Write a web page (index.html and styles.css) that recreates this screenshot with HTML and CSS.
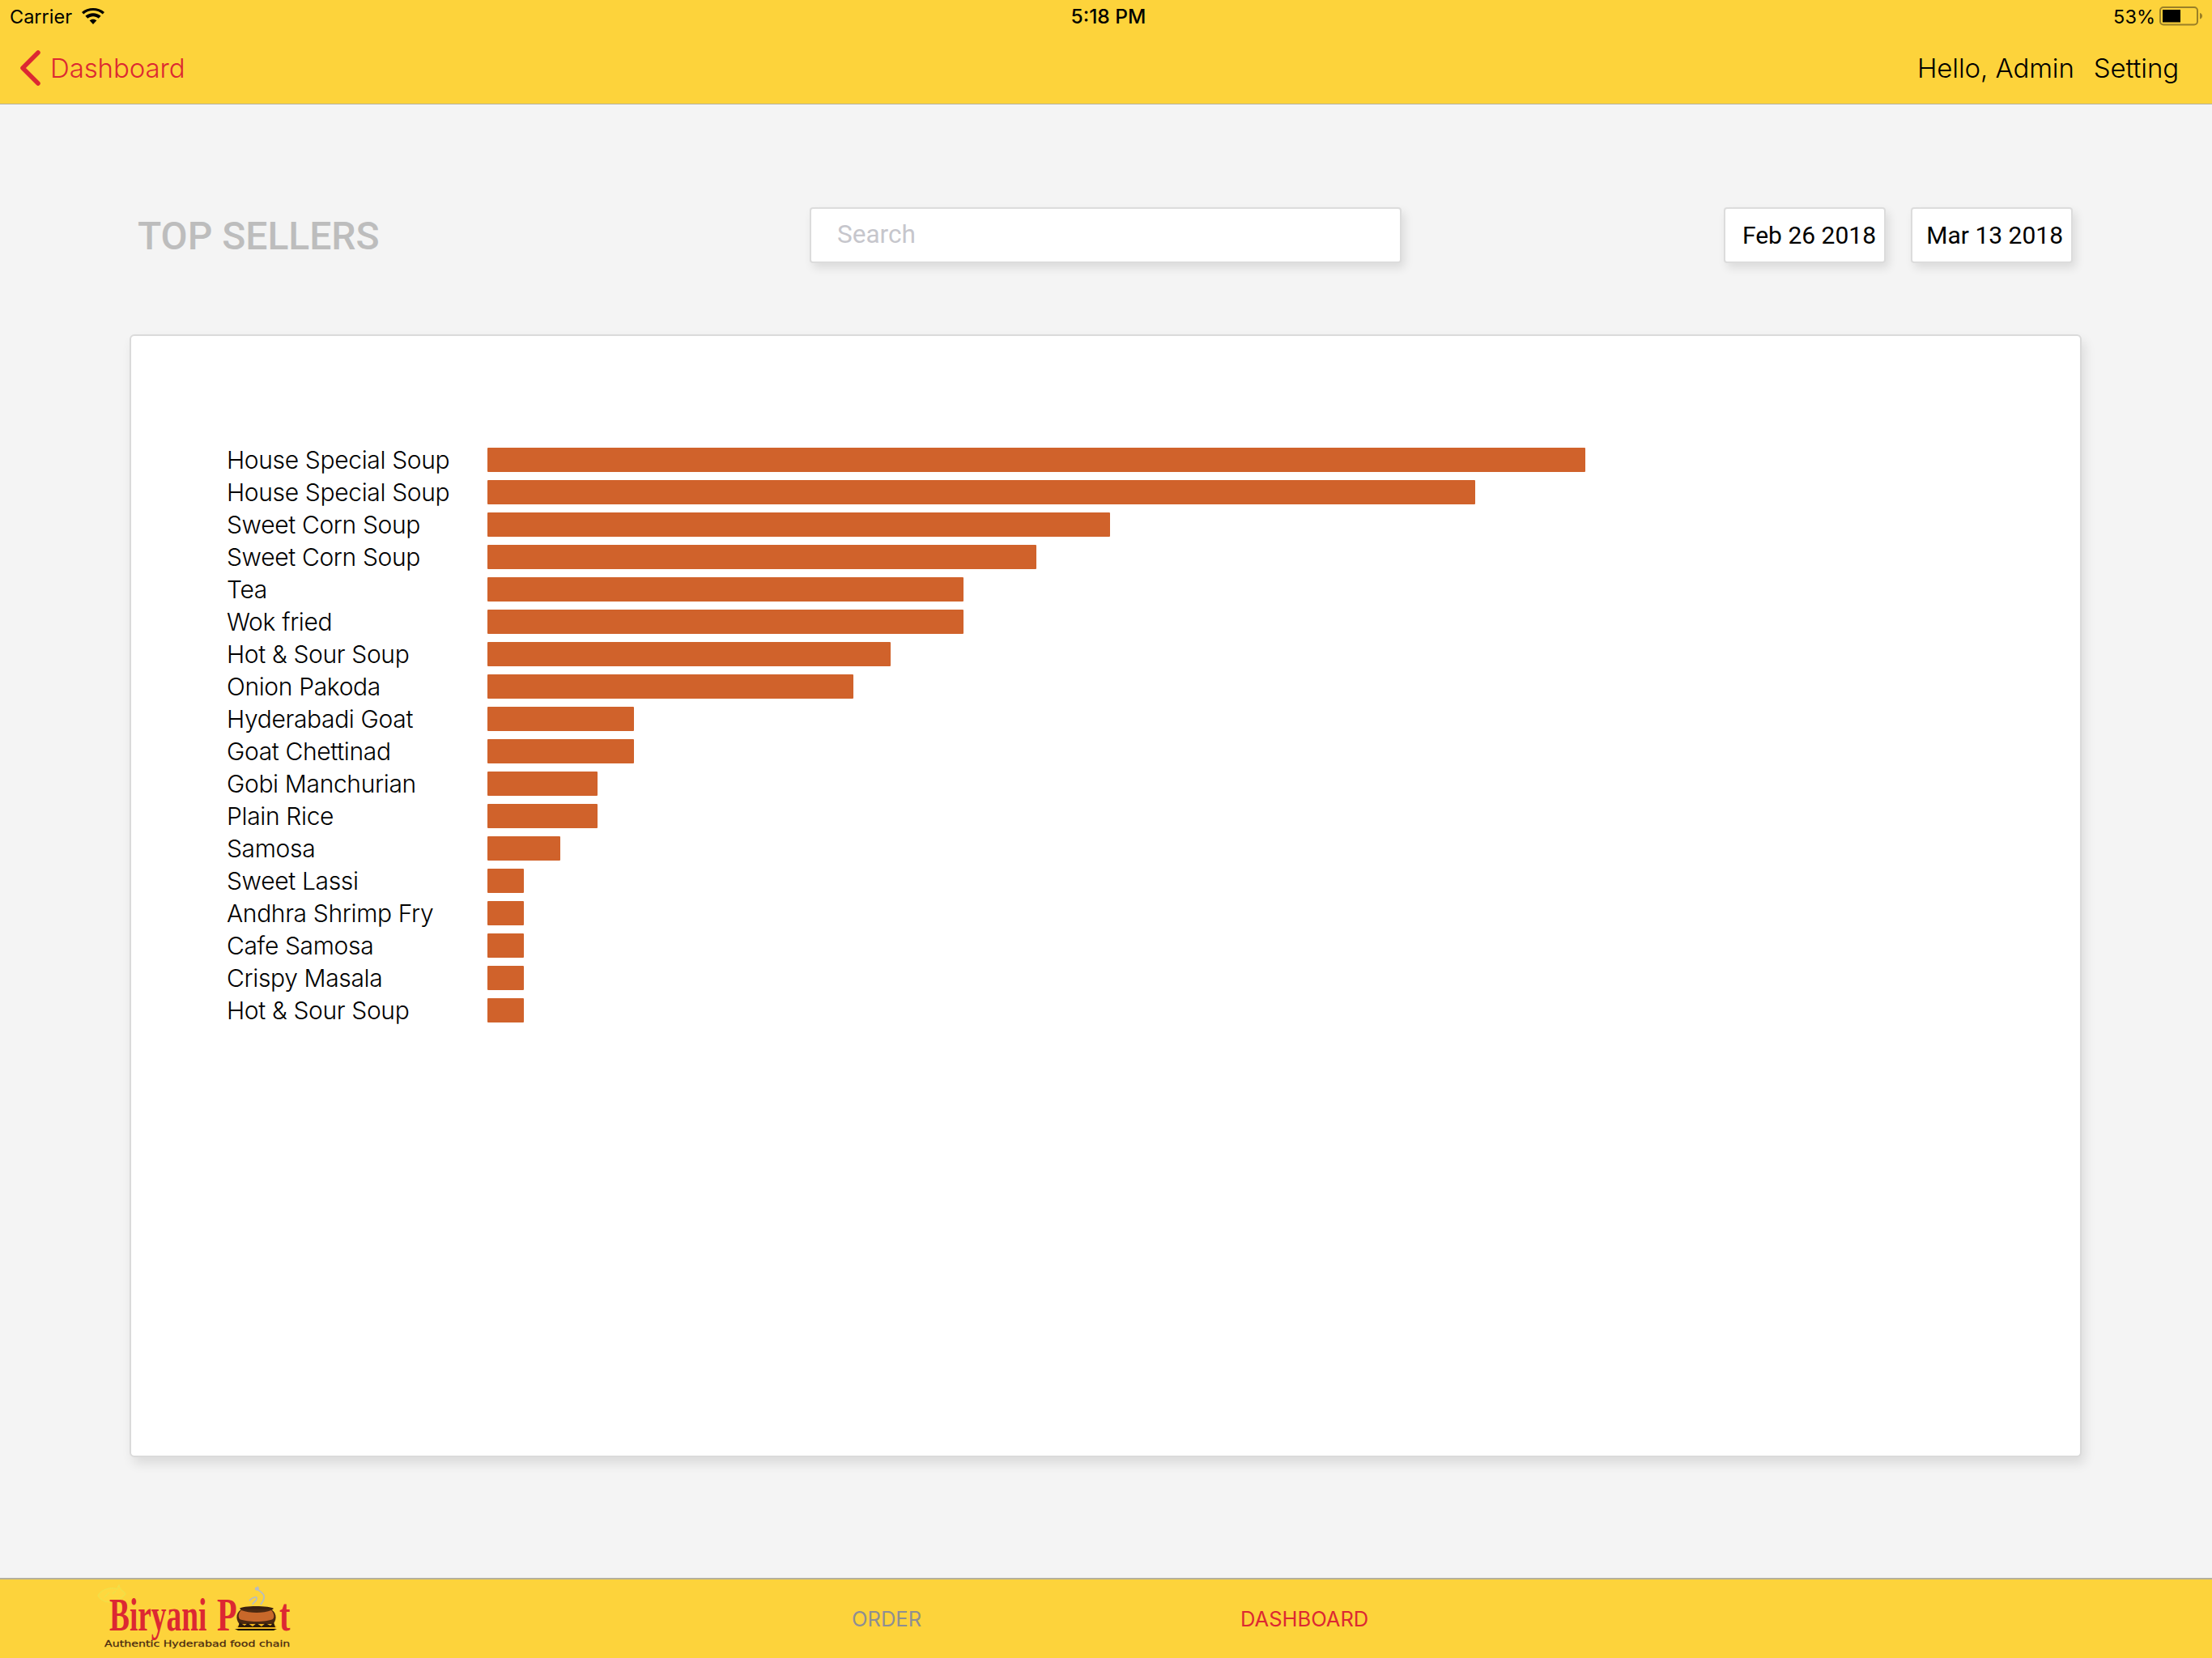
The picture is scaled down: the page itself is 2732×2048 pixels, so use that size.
FILE: index.html
```html
<!DOCTYPE html>
<html lang="en">
<head>
<meta charset="utf-8">
<title>Top Sellers</title>
<link rel="stylesheet" href="styles.css">
</head>
<body>
<header class="topbar">
  <div class="status">
    <div class="status-left">
      <span>Carrier</span>
      <svg class="wifi" viewBox="0 0 28 20" width="28" height="20"><path d="M14 20 L9.6 15.3 C12 13.2 16 13.2 18.4 15.3 Z M7.3 12.8 L4.4 9.8 C9.6 5 18.4 5 23.6 9.8 L20.7 12.8 C17 9.4 11 9.4 7.3 12.8 Z M2.2 7.4 L0 5 C7.6 -1.6 20.4 -1.6 28 5 L25.8 7.4 C19 1.6 9 1.6 2.2 7.4 Z"/></svg>
    </div>
    <div class="status-time">5:18 PM</div>
    <div class="status-right">
      <span>53%</span>
      <svg class="battery" viewBox="0 0 54 24" width="54" height="24"><rect class="battery-shell" x="1" y="1" width="46" height="21.500" rx="4"/><rect x="4" y="4" width="22" height="15.500"/><path class="battery-nub" d="M50 8 C52 8.500 53 10 53 11.750 C53 13.500 52 15 50 15.500 Z"/></svg>
    </div>
  </div>
  <nav class="navrow">
    <a class="back">
      <svg class="chevron" viewBox="0 0 26 44" width="26" height="44"><path d="M23 3 L4 22 L23 41"/></svg>
      <span>Dashboard</span>
    </a>
    <div class="nav-actions">
      <span>Hello, Admin</span>
      <span>Setting</span>
    </div>
  </nav>
</header>

<main class="content">
  <section class="toolbar">
    <h1 class="title">TOP SELLERS</h1>
    <div class="field search">Search</div>
    <div class="dates">
      <div class="field date">Feb 26 2018</div>
      <div class="field date">Mar 13 2018</div>
    </div>
  </section>
  <section class="card">
    <div class="row"><span class="label">House Special Soup</span><span class="bar" style="width:1356px"></span></div>
    <div class="row"><span class="label">House Special Soup</span><span class="bar" style="width:1220px"></span></div>
    <div class="row"><span class="label">Sweet Corn Soup</span><span class="bar" style="width:769px"></span></div>
    <div class="row"><span class="label">Sweet Corn Soup</span><span class="bar" style="width:678px"></span></div>
    <div class="row"><span class="label">Tea</span><span class="bar" style="width:588px"></span></div>
    <div class="row"><span class="label">Wok fried</span><span class="bar" style="width:588px"></span></div>
    <div class="row"><span class="label">Hot &amp; Sour Soup</span><span class="bar" style="width:498px"></span></div>
    <div class="row"><span class="label">Onion Pakoda</span><span class="bar" style="width:452px"></span></div>
    <div class="row"><span class="label">Hyderabadi Goat</span><span class="bar" style="width:181px"></span></div>
    <div class="row"><span class="label">Goat Chettinad</span><span class="bar" style="width:181px"></span></div>
    <div class="row"><span class="label">Gobi Manchurian</span><span class="bar" style="width:136px"></span></div>
    <div class="row"><span class="label">Plain Rice</span><span class="bar" style="width:136px"></span></div>
    <div class="row"><span class="label">Samosa</span><span class="bar" style="width:90px"></span></div>
    <div class="row"><span class="label">Sweet Lassi</span><span class="bar" style="width:45px"></span></div>
    <div class="row"><span class="label">Andhra Shrimp Fry</span><span class="bar" style="width:45px"></span></div>
    <div class="row"><span class="label">Cafe Samosa</span><span class="bar" style="width:45px"></span></div>
    <div class="row"><span class="label">Crispy Masala</span><span class="bar" style="width:45px"></span></div>
    <div class="row"><span class="label">Hot &amp; Sour Soup</span><span class="bar" style="width:45px"></span></div>
  </section>
</main>

<footer class="tabbar">
  <svg class="logo" viewBox="0 0 260 97" width="260" height="97">
    <path class="leaf" d="M1 20 C6 11 18 9 25 12 C25 10 26 8 27 7 C27 9 28 11 30 13 C33 15 35 17 35 18 C30 24 24 28 15 28 C9 28 4 25 1 20 Z M9 22 L15 16 M19 18 L23 14"/>
    <text class="logo-word" transform="translate(15 63) scale(0.667 1)">Biryani</text>
    <text class="logo-word" transform="translate(148 63) scale(0.72 1)">P</text>
    <text class="logo-word" transform="translate(225 63) scale(0.72 1)">t</text>
    <path class="steam" d="M199 9 C193 12 204 14 206 20 C207 25 204 28 202 31 M198 9 C202 14 194 14 196 10 M188 26 C192 22 198 20 197 24 C196 28 192 28 192 31"/>
    <path class="pot-rim" d="M176 36 C178 32 214 32 218 36 L214 39 L180 39 Z"/>
    <path class="pot" d="M178 37 C170 42 171 52 178 57 L215 57 C222 52 223 42 215 37 Z"/>
    <path class="pot-band" d="M178 38 C188 42 206 42 215 38 C219 42 219 47 217 49 C208 53 186 53 176 49 C174 46 174 42 178 38 Z"/>
    <path class="flame-glow" d="M172 58 L178 55 L216 55 L222 58 L218 63 L176 63 Z"/>
    <path class="flame" d="M176 53 L182 57 L186 54 L192 58 L197 54 L203 58 L208 54 L214 57 L218 53 L220 59 L174 59 Z"/>
    <path class="pot-base" d="M170 61 L222 61 L218 63 L174 63 Z"/>
    <text class="logo-tag" transform="translate(9 83) scale(1.35 1)">Authentic Hyderabad food chain</text>
  </svg>
  <div class="tabs">
    <span class="tab">ORDER</span>
    <span class="tab tab-active">DASHBOARD</span>
  </div>
</footer>
</body>
</html>
```

FILE: styles.css
```css
* { box-sizing: border-box; }

html, body {
  margin: 0;
  padding: 0;
}

body {
  width: 2732px;
  height: 2048px;
  display: flex;
  flex-direction: column;
  overflow: hidden;
  background: #f4f4f4;
  color: #000;
  font-family: Inter, "Liberation Sans", sans-serif;
}

/* Top bar */
.topbar {
  height: 129px;
  flex: none;
  background: #fdd33b;
  border-bottom: 1px solid #b5b09c;
}

.status {
  height: 40px;
  padding: 0 11px 0 12px;
  display: grid;
  grid-template-columns: 1fr auto 1fr;
  align-items: center;
  font-size: 23.500px;
}

.status-left {
  display: flex;
  align-items: center;
  gap: 12px;
}

.status-time {
  margin-left: 5px;
  font-size: 24.500px;
  font-weight: 500;
}

.status-right {
  display: flex;
  align-items: center;
  justify-content: flex-end;
  gap: 5px;
}

.wifi { fill: #000; }

.battery-shell {
  fill: none;
  stroke: #9a7f26;
  stroke-width: 2;
}

.battery-nub { fill: #9a7f26; }

.navrow {
  height: 88px;
  padding: 0 41px 0 24px;
  display: flex;
  align-items: center;
  justify-content: space-between;
  font-size: 33px;
  font-weight: 350;
  letter-spacing: -0.1px;
}

.back {
  display: flex;
  align-items: center;
  gap: 12px;
  color: #dc2832;
}

.chevron {
  fill: none;
  stroke: #dc2832;
  stroke-width: 5.500;
  stroke-linecap: round;
  stroke-linejoin: round;
}

.nav-actions {
  display: flex;
  gap: 24px;
}

/* Content */
.content {
  flex: 1;
  padding: 127px 161px 0 160px;
}

.toolbar {
  display: grid;
  grid-template-columns: 830px 731px 1fr;
  align-items: center;
  height: 69px;
  padding: 0 11px 0 10px;
  margin-bottom: 88px;
}

.title {
  margin: 0;
  padding-top: 1px;
  font-family: Roboto, "Liberation Sans", sans-serif;
  font-size: 48px;
  font-weight: 500;
  color: #bdbdbd;
}

.field {
  height: 69px;
  display: flex;
  align-items: center;
  background: #fff;
  border: 2px solid #dcdcdc;
  border-radius: 4px;
  box-shadow: 4px 6px 12px rgba(0, 0, 0, 0.10);
  font-family: Roboto, "Liberation Sans", sans-serif;
  font-size: 30px;
}

.search {
  padding: 0 0 3px 32px;
  font-size: 31.500px;
  color: #c6c6cc;
}

.dates {
  display: flex;
  justify-content: flex-end;
  gap: 31px;
}

.date {
  width: 200px;
  justify-content: flex-end;
  padding-right: 10px;
}

.card {
  height: 1387px;
  padding: 136px 0 0 118px;
  background: #fff;
  border: 2px solid #dadada;
  border-radius: 6px;
  box-shadow: 4px 8px 14px rgba(0, 0, 0, 0.10);
}

.row {
  height: 40px;
  display: flex;
  align-items: flex-start;
}

.label {
  width: 322px;
  flex: none;
  font-size: 30px;
  font-weight: 350;
  line-height: 34px;
  letter-spacing: -0.35px;
  white-space: nowrap;
}

.bar {
  height: 30px;
  margin-top: 2px;
  background: #d0622b;
  border-radius: 1px;
}

/* Bottom bar */
.tabbar {
  height: 99px;
  flex: none;
  display: flex;
  align-items: center;
  background: #fdd33b;
  border-top: 2px solid #b5b09c;
  padding-left: 120px;
}

.logo {
  flex: none;
}

.logo-word {
  font-family: "Liberation Serif", serif;
  font-weight: 700;
  font-size: 56px;
  fill: #dc2832;
}

.logo-tag {
  font-family: "DejaVu Sans", sans-serif;
  font-size: 10.500px;
  font-weight: 400;
  fill: #4a2a10;
  stroke: #4a2a10;
  stroke-width: 0.250;
}

.leaf {
  fill: #fed83f;
  stroke: #efe04a;
  stroke-width: 1.200;
}

.steam {
  fill: none;
  stroke: #b8bcc0;
  stroke-width: 1.800;
}

.pot-rim { fill: #3a2010; }
.pot { fill: #4a2810; }
.pot-band { fill: #c8682a; }
.flame-glow { fill: #f2b71d; }
.flame { fill: #2a1a0c; }
.pot-base { fill: #1a1208; }

.tabs {
  margin-left: 672px;
  display: flex;
  gap: 394px;
  font-size: 25.500px;
}

.tab { color: #8e8e93; }
.tab-active { color: #dc2832; }
```
